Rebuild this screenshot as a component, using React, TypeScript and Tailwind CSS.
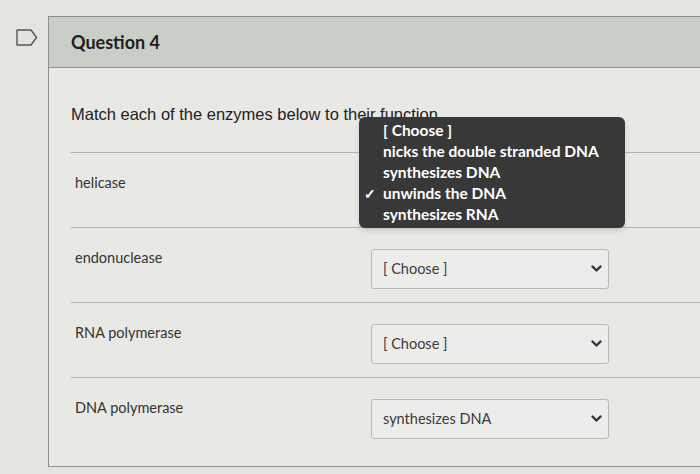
import React from "react";

const rows = [
  { label: "helicase", value: "unwinds the DNA" },
  { label: "endonuclease", value: "[ Choose ]" },
  { label: "RNA polymerase", value: "[ Choose ]" },
  { label: "DNA polymerase", value: "synthesizes DNA" },
];

const options = [
  "[ Choose ]",
  "nicks the double stranded DNA",
  "synthesizes DNA",
  "unwinds the DNA",
  "synthesizes RNA",
];

function Chevron() {
  return (
    <svg width="11" height="8" viewBox="0 0 11 8" className="text-[#333]">
      <path d="M1.5 1.5 L5.5 5.5 L9.5 1.5" fill="none" stroke="currentColor" strokeWidth="2.4" strokeLinecap="round" strokeLinejoin="round" />
    </svg>
  );
}

export default function App() {
  return (
    <div className="flex h-[474px] w-[700px] overflow-hidden bg-[#e3e4e0] font-['Lato','Liberation_Sans',sans-serif] text-[#2b2b2b]">
      <div className="w-[48px] shrink-0 pt-[29px] pl-[16px]">
        <svg width="22" height="17" viewBox="0 0 22 17">
          <path d="M1 1 H15 L20.5 8.5 L15 16 H1 Z" fill="none" stroke="#555" strokeWidth="1.4" strokeLinejoin="round" />
        </svg>
      </div>
      <div className="mt-[16px] mb-[7px] flex flex-1 flex-col border-t border-b border-l border-[#8e8f8c] bg-[#e8e9e5]">
        <div className="flex h-[51px] shrink-0 items-center border-b border-[#8e8f8c] bg-[#c9cec6] pl-[22px]">
          <h2 className="text-[18px] font-bold text-[#1e1e1e]">Question 4</h2>
        </div>
        <div className="relative flex-1 pl-[22px]">
          <p className="mt-[36px] font-['Liberation_Sans',sans-serif] text-[16.5px] leading-[20px] text-[#222]">
            Match each of the enzymes below to their function
          </p>
          <div className="mt-[28px]">
            {rows.map((r) => (
              <div key={r.label} className="flex h-[75px] items-start border-t border-[#b3b4b0] pt-[21px]">
                <div className="w-[300px] shrink-0 pl-[4px] text-[14.5px] leading-[18px] text-[#333]">{r.label}</div>
                <div className="flex h-[40px] w-[238px] items-center justify-between rounded-[3px] border border-[#b8b9b5] bg-[#ecedea] pr-[6px] pl-[11px] text-[14.5px] text-[#3a3a3a]">
                  <span>{r.value}</span>
                  <Chevron />
                </div>
              </div>
            ))}
          </div>
          <div className="absolute top-[49px] left-[310px] w-[266px] rounded-[6px] bg-[#383838] py-[3px] shadow-md">
            {options.map((o) => (
              <div key={o} className="flex h-[21px] items-center text-[15.5px] font-bold text-white">
                <span className="w-[24px] pl-[5px] text-[14px]">{o === "unwinds the DNA" ? "✓" : ""}</span>
                <span>{o}</span>
              </div>
            ))}
          </div>
        </div>
      </div>
    </div>
  );
}
